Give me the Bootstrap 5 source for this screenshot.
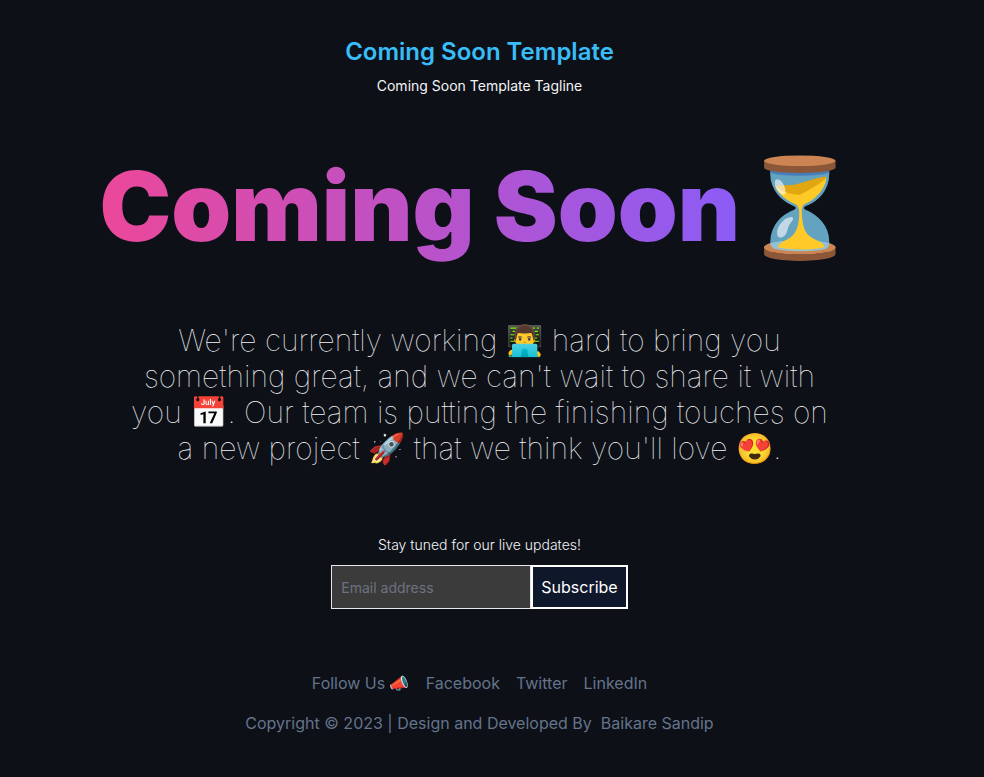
<!DOCTYPE html>
<html lang="en">
<head>
<meta charset="utf-8">
<meta name="viewport" content="width=device-width, initial-scale=1">
<title>Coming Soon Template</title>
<link rel="stylesheet" href="https://cdn.jsdelivr.net/npm/bootstrap@5.3.0/dist/css/bootstrap.min.css">
<style>
body{background:#0d1017;color:#f3f4f6;font-family:Inter,"Noto Color Emoji",sans-serif;font-size:16px;line-height:24px;min-height:100vh}
.page{padding:36px 25px 24px 0}
.brand{font-size:24px;line-height:32px;font-weight:600;color:#38bdf8}
.tagline{font-size:14px;line-height:20px}
.hero{font-size:96px;line-height:96px;font-weight:900;margin:62px 0 68px}
.hero-text{background:linear-gradient(to right,#ec4899,#8b5cf6);-webkit-background-clip:text;background-clip:text;color:transparent}
.intro{font-size:30px;line-height:36px;font-weight:100;max-width:720px;margin-bottom:66px}
.signup-label{font-size:14px;line-height:20px;font-weight:300;margin-bottom:10px}
.field{width:200px;height:44px;padding:0 9px;font-size:14px;background:#3b3b3b;border:1px solid #e5e7eb;color:#fff}
.field::placeholder{color:#6b7280}
.send{height:44px;padding:0 8px;background:#0f172a;border:2px solid #fff;color:#fff}
.foot{margin-top:62px}
.foot,.foot a{color:#64748b}
</style>
<script src="https://cdn.jsdelivr.net/npm/bootstrap@5.3.0/dist/js/bootstrap.bundle.min.js" defer></script>
</head>
<body>
<div class="page d-flex flex-column align-items-center text-center">
  <header>
    <h1 class="brand mb-2">Coming Soon Template</h1>
    <p class="tagline mb-0">Coming Soon Template Tagline</p>
  </header>
  <main class="d-flex flex-column align-items-center">
    <h2 class="hero"><span class="hero-text">Coming Soon</span>⏳</h2>
    <p class="intro">We're currently working 👨‍💻 hard to bring you something great, and we can't wait to share it with you 📅. Our team is putting the finishing touches on a new project 🚀 that we think you'll love 😍.</p>
    <form>
      <label for="email" class="signup-label">Stay tuned for our live updates!</label>
      <div class="d-flex justify-content-center">
        <input id="email" class="field" type="email" placeholder="Email address">
        <button class="send" type="button">Subscribe</button>
      </div>
    </form>
  </main>
  <footer class="foot">
    <div class="d-flex flex-wrap justify-content-center gap-3 mb-3">
      <span>Follow Us 📣</span>
      <a class="text-decoration-none" href="#">Facebook</a>
      <a class="text-decoration-none" href="#">Twitter</a>
      <a class="text-decoration-none" href="#">LinkedIn</a>
    </div>
    <p class="mb-0">Copyright © 2023 | Design and Developed By &nbsp;<a class="text-decoration-none" href="#">Baikare Sandip</a></p>
  </footer>
</div>
</body>
</html>
